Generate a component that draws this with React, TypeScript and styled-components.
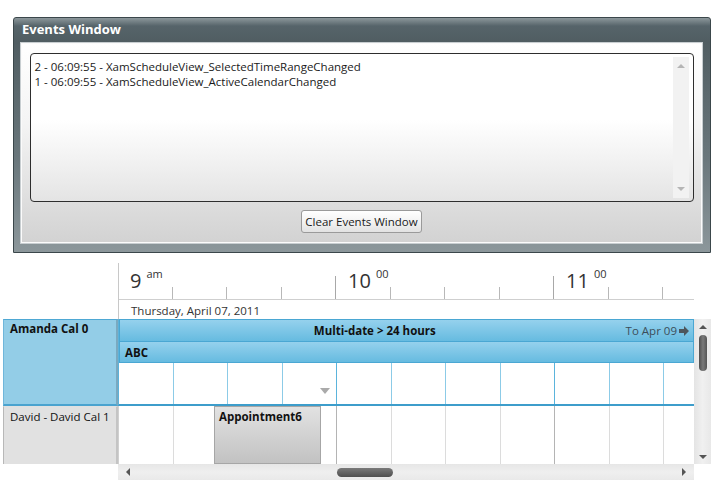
import React from "react";
import styled, { createGlobalStyle } from "styled-components";

const Global = createGlobalStyle`
  html, body { margin: 0; padding: 0; background: #fff; }
  body { font-family: "Open Sans", "Noto Sans", sans-serif; font-size: 12px; color: #222; }
`;

const Q = 54.5;

const Page = styled.div`
  padding-top: 17px;
  width: 715px;
`;

const EventsFrame = styled.div`
  margin-left: 13px;
  width: 696px;
  height: 234px;
  border: 1px solid #3b474b;
  border-radius: 3px 3px 0 0;
  background: linear-gradient(#8c979b 0, #56646a 8px, #505d62 24px, #6a777c 60%, #8c979b 100%);
  display: flex;
  flex-direction: column;
`;

const FrameTitle = styled.div`
  height: 24px;
  line-height: 22px;
  padding-left: 8px;
  color: #fff;
  font-weight: 700;
  font-size: 13px;
`;

const InnerPanel = styled.div`
  margin: 0 7px 0 6px;
  height: 202px;
  border: 1px solid #c8ced1;
  box-shadow: inset 0 0 0 1px #fbfbfb;
  background: linear-gradient(#ffffff 0%, #f4f4f4 40%, #d2d2d2 100%);
  display: flex;
  flex-direction: column;
  align-items: center;
  padding-top: 10px;
  box-sizing: border-box;
`;

const LogBox = styled.div`
  width: 664px;
  height: 149px;
  box-sizing: border-box;
  border: 1px solid #2e2e2e;
  border-radius: 4px;
  background: linear-gradient(#ffffff 0%, #ffffff 45%, #e4e4e4 100%);
  display: flex;
  padding: 3px 4px 3px 3px;
`;

const LogLines = styled.div`
  flex: 1;
  padding: 2px 0 0 1px;
  font-size: 11.5px;
  line-height: 15px;
  color: #1a1a1a;
`;

const LogScroll = styled.div`
  width: 16px;
  background: #f2f2f2;
  display: flex;
  flex-direction: column;
  justify-content: space-between;
  align-items: center;
  padding: 6px 0;
`;

const ClearButton = styled.button`
  margin-top: 8px;
  width: 121px;
  height: 23px;
  border: 1px solid #9a9a9a;
  border-radius: 3px;
  background: linear-gradient(#ffffff, #f3f3f3 50%, #e2e2e2);
  font-family: "Open Sans", "Noto Sans", sans-serif;
  font-size: 11.5px;
  color: #1a1a1a;
  padding: 0;
`;

const Schedule = styled.div`
  margin: 10px 0 0 3px;
  display: grid;
  grid-template-columns: 115px 576px 17px;
  grid-template-rows: 56px 87px 58px 16px;
`;

const TimeHeader = styled.div`
  grid-column: 2;
  grid-row: 1;
  border-left: 1px solid #c8c8c8;
  overflow: hidden;
  display: flex;
  flex-direction: column;
`;

const HourRow = styled.div`
  display: flex;
  height: 36px;
  border-bottom: 1px solid #cfcfcf;
  margin-left: -1px;
`;

const HourCell = styled.div`
  width: ${Q * 4}px;
  flex-shrink: 0;
  display: flex;
  flex-direction: column;
`;

const HourLabel = styled.div`
  height: 24px;
  padding-left: 12px;
  color: #333;
  font-size: 20px;
  line-height: 35px;
  white-space: nowrap;
  sup {
    font-size: 11px;
    vertical-align: top;
    line-height: 21px;
    margin-left: 5px;
  }
`;

const TickRow = styled.div`
  display: flex;
  height: 12px;
  align-items: flex-end;
`;

const Tick = styled.div<{ $major?: boolean }>`
  width: ${Q}px;
  flex-shrink: 0;
  box-sizing: border-box;
  height: ${(p) => (p.$major ? 23 : 12)}px;
  border-right: 1px solid ${(p) => (p.$major ? "#a8a8a8" : "#b8b8b8")};
`;

const DateRow = styled.div`
  height: 19px;
  padding-left: 12px;
  line-height: 22px;
  font-size: 11.5px;
  color: #333;
`;

const ResourceHeader = styled.div<{ $active?: boolean; $row: number }>`
  grid-column: 1;
  grid-row: ${(p) => p.$row};
  box-sizing: border-box;
  background: ${(p) => (p.$active ? "#93cde7" : "#e1e1e1")};
  border-left: 1px solid ${(p) => (p.$active ? "#6fb6da" : "#b8b8b8")};
  border-top: 1px solid ${(p) => (p.$active ? "#4ea8d4" : "#e1e1e1")};
  border-bottom: ${(p) => (p.$active ? "2px solid #4aa3cf" : "none")};
  border-right: 2px solid ${(p) => (p.$active ? "#7aa9c0" : "#c4c4c4")};
  padding: ${(p) => (p.$active ? "1px" : "2px")} 0 0 6px;
  font-size: 11.5px;
  font-weight: ${(p) => (p.$active ? 700 : 400)};
  color: #111;
  line-height: 16px;
`;

const ResourceBody = styled.div<{ $active?: boolean; $row: number }>`
  grid-column: 2;
  grid-row: ${(p) => p.$row};
  position: relative;
  display: flex;
  flex-direction: column;
  overflow: hidden;
  border-bottom: ${(p) => (p.$active ? "2px solid #3d9dcb" : "none")};
  border-left: 1px solid ${(p) => (p.$active ? "#5db2da" : "#d0d0d0")};
`;

const AllDayBar = styled.div<{ $h: number; $first?: boolean }>`
  height: ${(p) => p.$h}px;
  box-sizing: border-box;
  border: 1px solid #4aa7d3;
  border-top: ${(p) => (p.$first ? "1px solid #4aa7d3" : "none")};
  background: linear-gradient(#95d1ed, #66bbe0);
  display: flex;
  align-items: center;
  padding: 0 4px;
  font-size: 11.5px;
  color: #111;
  white-space: nowrap;
`;

const BarTitle = styled.div<{ $center?: boolean }>`
  flex: 1;
  font-weight: 700;
  text-align: ${(p) => (p.$center ? "center" : "left")};
  padding-left: ${(p) => (p.$center ? 0 : 1)}px;
`;

const BarTo = styled.div`
  display: flex;
  align-items: center;
  gap: 2px;
  color: #3c4e5a;
  font-size: 11.5px;
`;

const Slots = styled.div`
  flex: 1;
  display: flex;
`;

const Slot = styled.div<{ $line: string }>`
  width: ${Q}px;
  flex-shrink: 0;
  box-sizing: border-box;
  border-right: 1px solid ${(p) => p.$line};
  position: relative;
`;

const MoreMark = styled.div`
  position: absolute;
  right: 6px;
  bottom: 10px;
  width: 0;
  height: 0;
  border-left: 5px solid transparent;
  border-right: 5px solid transparent;
  border-top: 6px solid #aaaaaa;
`;

const Appointment = styled.div`
  position: absolute;
  top: 0;
  bottom: 0;
  left: 95px;
  width: 107px;
  box-sizing: border-box;
  border: 1px solid #a6a6a6;
  background: linear-gradient(#e2e2e2, #c2c2c2);
  padding: 2px 0 0 4px;
  font-weight: 700;
  font-size: 11.5px;
  line-height: 16px;
  color: #111;
`;

const VScroll = styled.div`
  grid-column: 3;
  grid-row: 2 / span 2;
  background: linear-gradient(90deg, #e4e4e4, #f0f0f0 50%, #e8e8e8);
  display: flex;
  flex-direction: column;
  align-items: center;
  padding: 5px 0 4px 1px;
`;

const VThumb = styled.div`
  margin-top: 5px;
  width: 8px;
  height: 36px;
  border-radius: 4px;
  background: linear-gradient(90deg, #4f4f4f, #7a7a7a 50%, #555);
`;

const Spacer = styled.div`
  flex: 1;
`;

const HScroll = styled.div`
  grid-column: 2;
  grid-row: 4;
  background: linear-gradient(#e6e6e6, #efefef 50%, #e9e9e9);
  display: flex;
  align-items: center;
  padding: 0 7px 0 7px;
`;

const HThumb = styled.div`
  margin-left: 206px;
  width: 56px;
  height: 9px;
  border-radius: 5px;
  background: linear-gradient(#7a7a7a, #4f4f4f);
`;

const Arrow = ({ dir, color = "#666" }: { dir: "up" | "down" | "left" | "right"; color?: string }) => {
  const pts =
    dir === "up"
      ? "0,5 4,1 8,5"
      : dir === "down"
      ? "0,1 4,5 8,1"
      : dir === "left"
      ? "5,0 1,4 5,8"
      : "1,0 5,4 1,8";
  const w = dir === "up" || dir === "down" ? 8 : 6;
  const h = dir === "up" || dir === "down" ? 6 : 8;
  return (
    <svg width={w} height={h} viewBox={`0 0 ${w} ${h}`} style={{ display: "block" }}>
      <polygon points={pts} fill={color} />
    </svg>
  );
};

const ToArrow = () => (
  <svg width="10" height="10" viewBox="0 0 10 10" style={{ display: "block" }}>
    <polygon points="0,3 5,3 5,0 10,5 5,10 5,7 0,7" fill="#4d565c" />
  </svg>
);

const slotLines = (minor: string, major: string) =>
  Array.from({ length: 11 }, (_, i) => ((i + 1) % 4 === 0 ? major : minor));

const hours = [
  { h: "9", s: "am" },
  { h: "10", s: "00" },
  { h: "11", s: "00" },
];

export default function App() {
  const blueLines = slotLines("#8ccbe7", "#5bb4dc");
  const greyLines = slotLines("#dcdcdc", "#b4b4b4");
  return (
    <Page>
      <Global />
      <EventsFrame>
        <FrameTitle>Events Window</FrameTitle>
        <InnerPanel>
          <LogBox>
            <LogLines>
              <div>2 - 06:09:55 - XamScheduleView_SelectedTimeRangeChanged</div>
              <div>1 - 06:09:55 - XamScheduleView_ActiveCalendarChanged</div>
            </LogLines>
            <LogScroll>
              <Arrow dir="up" color="#b5b5b5" />
              <Arrow dir="down" color="#b5b5b5" />
            </LogScroll>
          </LogBox>
          <ClearButton>Clear Events Window</ClearButton>
        </InnerPanel>
      </EventsFrame>

      <Schedule>
        <TimeHeader>
          <HourRow>
            {hours.map((hr) => (
              <HourCell key={hr.h}>
                <HourLabel>
                  {hr.h}
                  <sup>{hr.s}</sup>
                </HourLabel>
                <TickRow>
                  <Tick />
                  <Tick />
                  <Tick />
                  <Tick $major />
                </TickRow>
              </HourCell>
            ))}
          </HourRow>
          <DateRow>Thursday, April 07, 2011</DateRow>
        </TimeHeader>

        <ResourceHeader $active $row={2}>Amanda Cal 0</ResourceHeader>
        <ResourceBody $active $row={2}>
          <AllDayBar $h={23} $first>
            <BarTitle $center>Multi-date &gt; 24 hours</BarTitle>
            <BarTo>
              To Apr 09
              <ToArrow />
            </BarTo>
          </AllDayBar>
          <AllDayBar $h={21}>
            <BarTitle>ABC</BarTitle>
          </AllDayBar>
          <Slots>
            {blueLines.map((c, i) => (
              <Slot key={i} $line={c}>
                {i === 3 && <MoreMark />}
              </Slot>
            ))}
          </Slots>
        </ResourceBody>
        <VScroll>
          <Arrow dir="up" color="#555" />
          <VThumb />
          <Spacer />
          <Arrow dir="down" color="#555" />
        </VScroll>

        <ResourceHeader $row={3}>David - David Cal 1</ResourceHeader>
        <ResourceBody $row={3}>
          <Slots>
            {greyLines.map((c, i) => (
              <Slot key={i} $line={c} />
            ))}
          </Slots>
          <Appointment>Appointment6</Appointment>
        </ResourceBody>

        <HScroll>
          <Arrow dir="left" color="#555" />
          <HThumb />
          <Spacer />
          <Arrow dir="right" color="#555" />
        </HScroll>
      </Schedule>
    </Page>
  );
}
